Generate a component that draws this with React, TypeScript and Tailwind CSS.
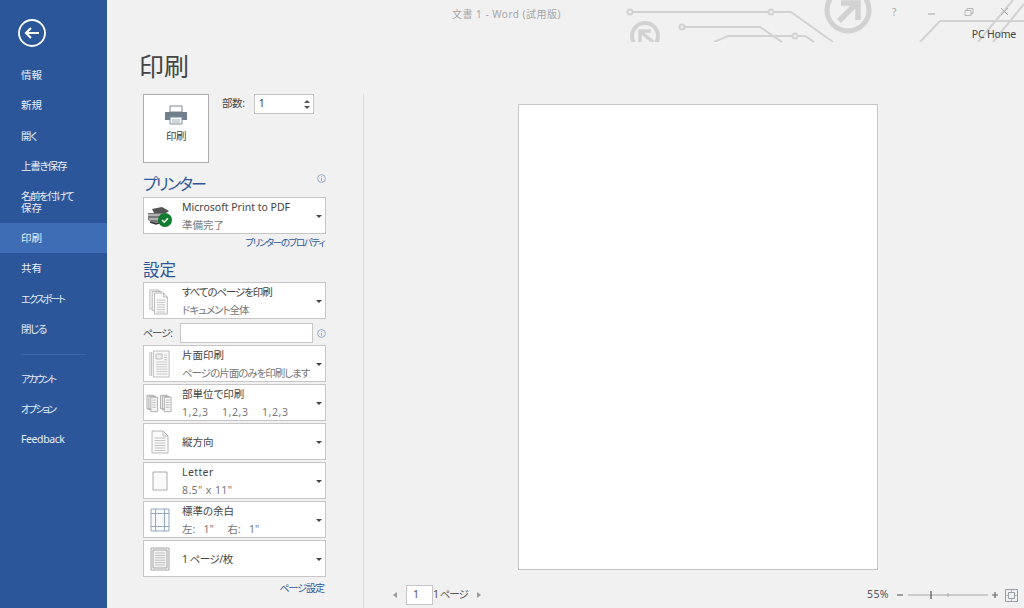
import React from "react";

const FONT = "font-['Noto_Sans','Noto_Sans_CJK_JP',sans-serif] [font-feature-settings:'palt']";

const navTop = [
  { label: "情報", cls: "" },
  { label: "新規", cls: "" },
  { label: "開く", cls: "tracking-[-1px]" },
  { label: "上書き保存", cls: "tracking-[-1.2px]" },
];
const navMid = [
  { label: "共有", cls: "" },
  { label: "エクスポート", cls: "text-[10px] tracking-[-1.9px]" },
  { label: "閉じる", cls: "tracking-[-1.4px]" },
];
const navBottom = [
  { label: "アカウント", cls: "text-[10px] tracking-[-2px]" },
  { label: "オプション", cls: "text-[10px] tracking-[-2px]" },
  { label: "Feedback", cls: "tracking-[-0.4px]" },
];

const NavItem: React.FC<{ label: string; active?: boolean; cls?: string }> = ({ label, active, cls = "text-[10.5px]" }) => (
  <div className={`flex h-[30.4px] items-center pl-[21px] pt-[1px] text-[10.5px] text-[#e8eef7] ${cls} ${active ? "bg-[#3e6db5]" : ""}`}>
    {label}
  </div>
);

const Caret = () => <div className="mt-[1px] h-0 w-0 border-x-[3px] border-t-[3px] border-x-transparent border-t-[#444]" />;

const DocLines: React.FC<{ x: number; y: number; w: number; n: number; gap?: number }> = ({ x, y, w, n, gap = 2.4 }) => (
  <>
    {Array.from({ length: n }).map((_, i) => (
      <line key={i} x1={x} x2={x + w} y1={y + i * gap} y2={y + i * gap} stroke="#b4b4b4" strokeWidth="0.8" />
    ))}
  </>
);

const PrinterStatus = () => (
  <svg width="26" height="24" viewBox="0 0 26 24">
    <path d="M5 5l10-2 7 4-3 2H7z" fill="#555" />
    <path d="M1 9h15l3 3v6l-12 1-6-3z" fill="#777" />
    <path d="M1 11h13M2 15h12" stroke="#eee" strokeWidth="1.2" />
    <path d="M3 18l6 2 6-2" stroke="#333" strokeWidth="1.5" fill="none" />
    <circle cx="18" cy="16" r="7" fill="#107c2e" />
    <path d="M15 16l2.2 2.2 3.8-4" stroke="#fff" strokeWidth="1.4" fill="none" />
  </svg>
);

const AllPages = () => (
  <svg width="22" height="28" viewBox="0 0 24 28" preserveAspectRatio="none" fill="#fafafa" stroke="#b0b0b0" strokeWidth="0.9">
    <path d="M1 3h10v19H1z" />
    <path d="M3.5 4.5h10v19h-10z" />
    <path d="M6 6h10l4 4v17H6z" />
    <path d="M16 6v4h4" fill="none" />
    <DocLines x={8.5} y={13} w={9} n={6} />
  </svg>
);

const OneSided = () => (
  <svg width="21" height="28" viewBox="0 0 24 28" preserveAspectRatio="none" fill="#fafafa" stroke="#b0b0b0" strokeWidth="0.9">
    <path d="M1 2v24M3 2v24" fill="none" />
    <path d="M5 1h18v26H5z" />
    <path d="M8 4h7v5H8z" fill="#eee" />
    <DocLines x={17} y={5} w={4} n={3} />
    <DocLines x={8} y={12} w={13} n={6} />
  </svg>
);

const Collate = () => (
  <svg width="27" height="20" viewBox="0 0 28 20" fill="#f4f4f4" stroke="#a6a6a6" strokeWidth="0.9">
    <path d="M1 2h7v14H1zM3 3h7v14H3z" />
    <path d="M5 4h7v15H5z" />
    <DocLines x={6.5} y={7} w={4} n={4} gap={2.5} />
    <path d="M15 2h7v14h-7zM17 3h7v14h-7z" />
    <path d="M19 4h7v15h-7z" />
    <DocLines x={20.5} y={7} w={4} n={4} gap={2.5} />
  </svg>
);

const Portrait = () => (
  <svg width="18" height="24" viewBox="0 0 18 24" fill="#fafafa" stroke="#b0b0b0" strokeWidth="0.9">
    <path d="M1 1h11l5 5v17H1z" />
    <path d="M12 1v5h5" fill="none" />
    <DocLines x={3.5} y={8} w={11} n={6} gap={2.5} />
  </svg>
);

const Letter = () => (
  <svg width="16" height="20" viewBox="0 0 16 20" fill="#fafafa" stroke="#a3a3a3" strokeWidth="0.9">
    <path d="M1 1h14v18H1z" />
  </svg>
);

const Margins = () => (
  <svg width="20" height="24" viewBox="0 0 20 24" fill="#fafafa" stroke="#8aa0b8" strokeWidth="0.9">
    <path d="M1 1h18v22H1z" />
    <path d="M5.5 1v22M14.5 1v22M1 5.5h18M1 18.5h18" fill="none" />
  </svg>
);

const PerSheet = () => (
  <svg width="20" height="24" viewBox="0 0 20 24" fill="#fafafa" stroke="#9a9a9a" strokeWidth="0.9">
    <path d="M1 1h18v22H1z" />
    <path d="M3 3h14v18H3z" fill="#f2f2f2" />
    <DocLines x={5} y={6} w={10} n={6} gap={2.4} />
  </svg>
);

const Dropdown: React.FC<{ icon: React.ReactNode; top: string; bottom?: string; topClass?: string; bottomClass?: string }> = ({
  icon,
  top,
  bottom,
  topClass = "",
  bottomClass = "",
}) => (
  <div className="flex h-[37px] w-[183px] items-center border border-[#c6c6c6] bg-white">
    <div className="flex w-[38px] shrink-0 justify-center pr-[7px]">{icon}</div>
    <div className="flex min-w-0 flex-1 flex-col gap-[2px] pt-[2px] text-[10.5px] leading-[15.5px]">
      <div className={`whitespace-pre text-[#444] ${topClass}`}>{top}</div>
      {bottom && <div className={`whitespace-pre text-[#777] ${bottomClass}`}>{bottom}</div>}
    </div>
    <div className="flex w-[9px] shrink-0 justify-start">
      <Caret />
    </div>
  </div>
);

const Info = () => (
  <svg width="9" height="9" viewBox="0 0 9 9" fill="none" stroke="#7d9cc0" strokeWidth="0.8">
    <circle cx="4.5" cy="4.5" r="3.9" />
    <path d="M4.5 3.8v3M4.5 2.2v.8" />
  </svg>
);

// circuit board decoration behind the title bar
const TitleArt = () => (
  <svg className="pointer-events-none absolute left-[513px] top-0" width="404" height="42" viewBox="0 0 404 42" fill="none" stroke="#d2d2d2" strokeWidth="2">
    <circle cx="10" cy="12" r="2.5" />
    <path d="M13 12h136" />
    <circle cx="151" cy="12" r="2.5" />
    <path d="M154 12h17l42 30" />
    <circle cx="25" cy="36" r="13" strokeWidth="4" />
    <path d="M20 42v-11h11M21 32l12 10" strokeWidth="3.5" />
    <circle cx="62" cy="27" r="2.5" />
    <path d="M65 27h75l22 15" />
    <path d="M94 42l14-6h65" />
    <circle cx="175" cy="36" r="2.5" />
    <path d="M178 36h7l9 6" />
    <circle cx="228" cy="10" r="21" strokeWidth="5" />
    <path d="M219 21l18-18M221 3h17v17" strokeWidth="5.5" />
    <path d="M300 42l20-21h84M358 42l35-42M373 42l31-38" />
  </svg>
);

const WinControls = () => (
  <div className="flex items-center text-[#a8a8a8]">
    <span className="absolute left-[785px] top-[5px] text-[10px]">?</span>
    <svg className="absolute left-[820px] top-[9px]" width="10" height="8" viewBox="0 0 10 8" stroke="#a8a8a8">
      <path d="M1 5h7" />
    </svg>
    <svg className="absolute left-[857px] top-[7px]" width="10" height="10" viewBox="0 0 10 10" fill="none" stroke="#a8a8a8" strokeWidth="0.8">
      <path d="M1 3.5h6v5H1zM3 3.5V1.5h6v5H7" />
    </svg>
    <svg className="absolute left-[893px] top-[7px]" width="10" height="10" viewBox="0 0 10 10" stroke="#a8a8a8">
      <path d="M1 1l7 7M8 1l-7 7" />
    </svg>
  </div>
);

export default function App() {
  return (
    <div className={`flex h-[608px] w-[1024px] overflow-hidden bg-[#f1f1f1] ${FONT}`}>
      <aside className="flex h-full w-[107px] shrink-0 flex-col bg-[#2b579a]">
        <div className="flex h-[60px] items-start pl-[18px] pt-[19px]">
          <svg width="28" height="28" viewBox="0 0 28 28" fill="none" stroke="#fff">
            <circle cx="14" cy="14" r="13" strokeWidth="1.8" />
            <path d="M21 14H8M13 9l-5 5 5 5" strokeWidth="2.2" />
          </svg>
        </div>
        {navTop.map((n) => (
          <NavItem key={n.label} label={n.label} cls={n.cls} />
        ))}
        <div className="flex h-[41.4px] flex-col justify-center pl-[21px] text-[10.5px] leading-[12px] text-[#e8eef7]">
          <span className="tracking-[-1.5px]">名前を付けて</span>
          <span>保存</span>
        </div>
        <NavItem label="印刷" active />
        {navMid.map((n) => (
          <NavItem key={n.label} label={n.label} cls={n.cls} />
        ))}
        <div className="my-[9px] ml-[21px] h-px w-[65px] bg-[#3a66a8]" />
        {navBottom.map((n) => (
          <NavItem key={n.label} label={n.label} cls={n.cls} />
        ))}
      </aside>

      <main className="relative flex h-full min-w-0 flex-1 flex-col">
        <TitleArt />
        <WinControls />
        <header className="flex h-[28px] shrink-0 items-center pl-[345px] pt-[1px] text-[10px] tracking-[0.5px] text-[#a6a6a6]">
          文書 1 - Word (試用版)
        </header>
        <div className="absolute right-[8px] top-[27px] text-[10.5px] tracking-[-0.2px] text-[#444]">PC Home</div>

        <div className="flex min-h-0 flex-1">
          <section className="flex w-[256px] shrink-0 flex-col pl-[36px]">
            <h1 className="-ml-[4px] mt-[20px] h-[46px] text-[25px] leading-[36px] text-[#444]">印刷</h1>

            <div className="flex items-start">
              <div className="flex h-[69px] w-[66px] flex-col items-center border border-[#ababab] bg-white pt-[10px]">
                <svg width="24" height="20" viewBox="0 0 24 20">
                  <path d="M6 1h12v6H6z" fill="#fff" stroke="#7a8a97" />
                  <path d="M1 8a1 1 0 0 1 1-1h20a1 1 0 0 1 1 1v7h-22z" fill="#6f7f8c" />
                  <path d="M6 12h12v7H6z" fill="#fff" stroke="#7a8a97" />
                  <path d="M8 15h8M8 17h8" stroke="#a0abb4" />
                </svg>
                <span className="mt-[4px] text-[10.5px] tracking-[-0.5px] text-[#444]">印刷</span>
              </div>
              <span className="ml-[13px] mt-[2px] text-[10.5px] tracking-[-0.4px] text-[#444]">部数:</span>
              <div className="ml-[9px] flex h-[20px] w-[60px] items-center justify-between border border-[#c6c6c6] bg-white pl-[4px] pr-[3px] text-[10.5px] text-[#444]">
                <span>1</span>
                <div className="flex flex-col gap-[3px]">
                  <div className="h-0 w-0 border-x-[3px] border-b-[3px] border-x-transparent border-b-[#555]" />
                  <div className="h-0 w-0 border-x-[3px] border-t-[3px] border-x-transparent border-t-[#555]" />
                </div>
              </div>
            </div>

            <div className="mt-[8px] flex h-[26px] w-[183px] items-start justify-between">
              <span className="text-[16px] leading-[27px] tracking-[-2px] text-[#2b579a]">プリンター</span>
              <span className="mt-[3px]">
                <Info />
              </span>
            </div>
            <Dropdown icon={<PrinterStatus />} top="Microsoft Print to PDF" bottom="準備完了" />
            <div className="mt-[2px] w-[181px] text-right text-[9.5px] leading-[14px] tracking-[-1.4px] text-[#2b579a]">プリンターのプロパティ</div>

            <div className="mt-[8px] text-[16.5px] leading-[24px] text-[#2b579a]">設定</div>
            <div className="flex flex-col">
              <Dropdown icon={<AllPages />} top="すべてのページを印刷" bottom="ドキュメント全体" topClass="tracking-[-1.1px]" bottomClass="tracking-[-1px]" />
              <div className="mb-[2px] mt-[4px] flex h-[20px] w-[183px] items-center">
                <span className="w-[37px] text-[10px] tracking-[-0.8px] text-[#444]">ページ:</span>
                <div className="h-[20px] w-[134px] border border-[#c6c6c6] bg-white" />
                <span className="ml-[4px] flex">
                  <Info />
                </span>
              </div>
              <div className="flex flex-col gap-[2px]">
                <Dropdown icon={<OneSided />} top="片面印刷" bottom="ページの片面のみを印刷します" bottomClass="tracking-[-1px]" />
                <Dropdown icon={<Collate />} top="部単位で印刷" bottom="1,2,3    1,2,3    1,2,3" bottomClass="tracking-[0.6px]" />
                <Dropdown icon={<Portrait />} top="縦方向" />
                <Dropdown icon={<Letter />} top="Letter" bottom={'8.5" x 11"'} topClass="tracking-[0.4px]" bottomClass="tracking-[0.4px]" />
                <Dropdown icon={<Margins />} top="標準の余白" bottom={'左:   1"     右:   1"'} />
                <Dropdown icon={<PerSheet />} top="1 ページ/枚" topClass="tracking-[-0.5px]" />
              </div>
            </div>
            <div className="mt-[4px] w-[181px] text-right text-[10px] leading-[14px] tracking-[-1px] text-[#2b579a]">ページ設定</div>
          </section>

          <section className="mt-[66px] flex min-w-0 flex-1 flex-col border-l border-[#dcdcdc]">
            <div className="flex flex-1 justify-start pl-[154px] pt-[10px]">
              <div className="h-[466px] w-[360px] border border-[#c6c6c6] bg-white" />
            </div>
            <div className="flex h-[38px] items-start justify-between pl-[29px] pr-[6px] pt-[15px] text-[10.5px] text-[#555]">
              <div className="flex h-[20px] items-center">
                <div className="h-0 w-0 border-y-[3.5px] border-r-[4px] border-y-transparent border-r-[#999]" />
                <div className="ml-[9px] flex h-[20px] w-[27px] items-center border border-[#c6c6c6] bg-white pl-[6px]">1</div>
                <span className="tracking-[-1px]">1 ページ</span>
                <div className="ml-[9px] h-0 w-0 border-y-[3.5px] border-l-[4px] border-y-transparent border-l-[#999]" />
              </div>
              <div className="flex h-[20px] items-center">
                <span className="mr-[8px] tracking-[0.4px]">55%</span>
                <svg width="102" height="12" viewBox="0 0 102 12" stroke="#666">
                  <path d="M0 6h6" strokeWidth="1.2" />
                  <path d="M11 6h80" stroke="#a8a8a8" />
                  <path d="M34 2v8" strokeWidth="1.4" />
                  <path d="M51 4v4" stroke="#a8a8a8" />
                  <path d="M95 6h6M98 3v6" strokeWidth="1.2" />
                </svg>
                <svg className="ml-[6px]" width="13" height="13" viewBox="0 0 13 13" fill="none" stroke="#7f8a94" strokeWidth="0.8">
                  <path d="M.5.5h12v12H.5z" />
                  <path d="M3.5 3.5h6v6h-6z" />
                  <path d="M6.5 1.5v1M6.5 10.5v1M1.5 6.5h1M10.5 6.5h1" strokeWidth="1.2" />
                </svg>
              </div>
            </div>
          </section>
        </div>
      </main>
    </div>
  );
}
